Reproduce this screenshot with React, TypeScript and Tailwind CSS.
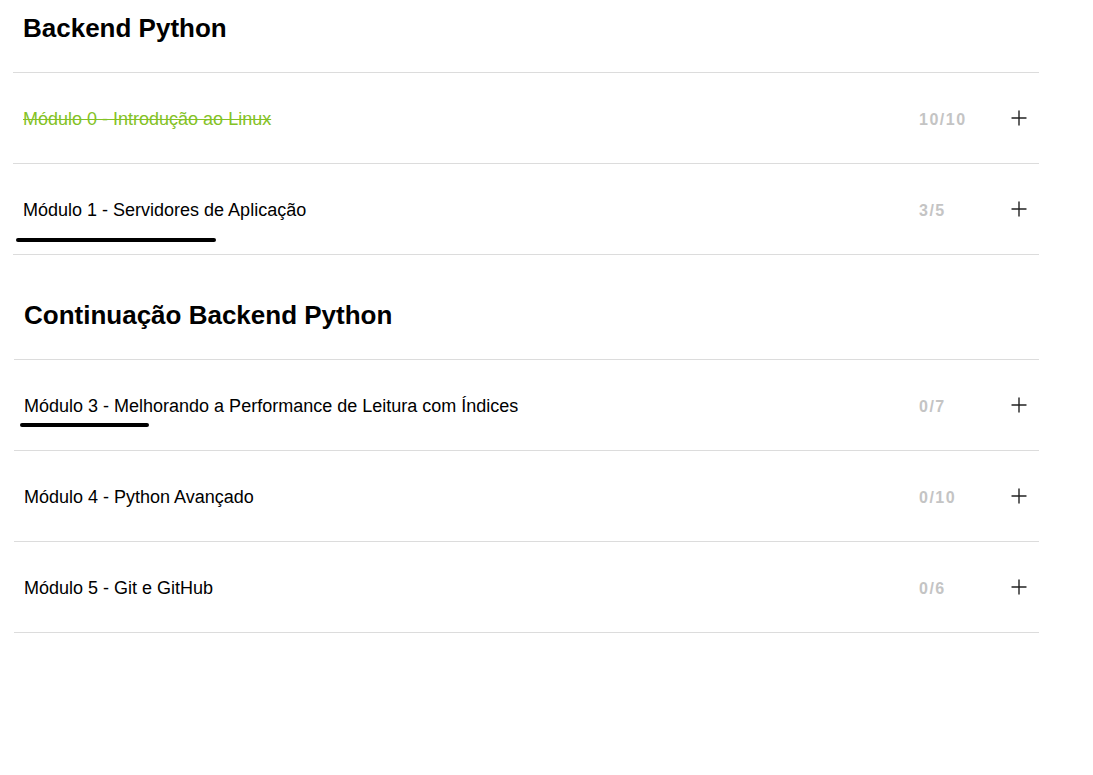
import { Plus } from "lucide-react"

type Mod = {
    label: string
    count: string
    done?: boolean
    bar?: { left: string; top: string; width: string }
}

const sections: { title: string; shift?: boolean; modules: Mod[] }[] = [
    {
        title: "Backend Python",
        modules: [
            { label: "Módulo 0 - Introdução ao Linux", count: "10/10", done: true },
            { label: "Módulo 1 - Servidores de Aplicação", count: "3/5", bar: { left: "left-[3px]", top: "top-[74px]", width: "w-[200px]" } },
        ],
    },
    {
        title: "Continuação Backend Python",
        shift: true,
        modules: [
            { label: "Módulo 3 - Melhorando a Performance de Leitura com Índices", count: "0/7", bar: { left: "left-[6px]", top: "top-[63px]", width: "w-[129px]" } },
            { label: "Módulo 4 - Python Avançado", count: "0/10" },
            { label: "Módulo 5 - Git e GitHub", count: "0/6" },
        ],
    },
]

export default function App() {
    return (
        <div className="min-h-[775px] bg-white font-['Liberation_Sans',Arial,sans-serif] text-black">
            <div className="pl-[13px] w-[1039px]">
                {sections.map((section, i) => (
                    <div key={section.title} className={`${i > 0 ? "mt-[32px]" : ""} ${section.shift ? "ml-[1px]" : ""}`}>
                        {/* Section heading */}
                        <div className="h-[73px] pt-[12px] pl-[10px] border-b border-[#dcdcdc]">
                            <h2 className="text-[26px] leading-[32px] font-bold">{section.title}</h2>
                        </div>

                        {section.modules.map((m) => (
                            <div key={m.label} className="relative h-[91px] flex items-center pl-[10px] pt-[3px] border-b border-[#dcdcdc]">
                                <span
                                    className={`flex-1 text-[18px] ${m.done ? "text-[#84c225] line-through decoration-[1px]" : "text-black"}`}
                                >
                                    {m.label}
                                </span>
                                <span className="w-[89px] pl-[1px] text-[16px] font-bold text-[#c4c4c4] tracking-[1.5px]">{m.count}</span>
                                <Plus size={24} strokeWidth={1.4} className="mr-[8px] -mt-[3px] text-[#222]" />
                                {m.bar && (
                                    <div className={`absolute ${m.bar.left} ${m.bar.top} ${m.bar.width} h-[4px] rounded-full bg-black`} />
                                )}
                            </div>
                        ))}
                    </div>
                ))}
            </div>
        </div>
    )
}
